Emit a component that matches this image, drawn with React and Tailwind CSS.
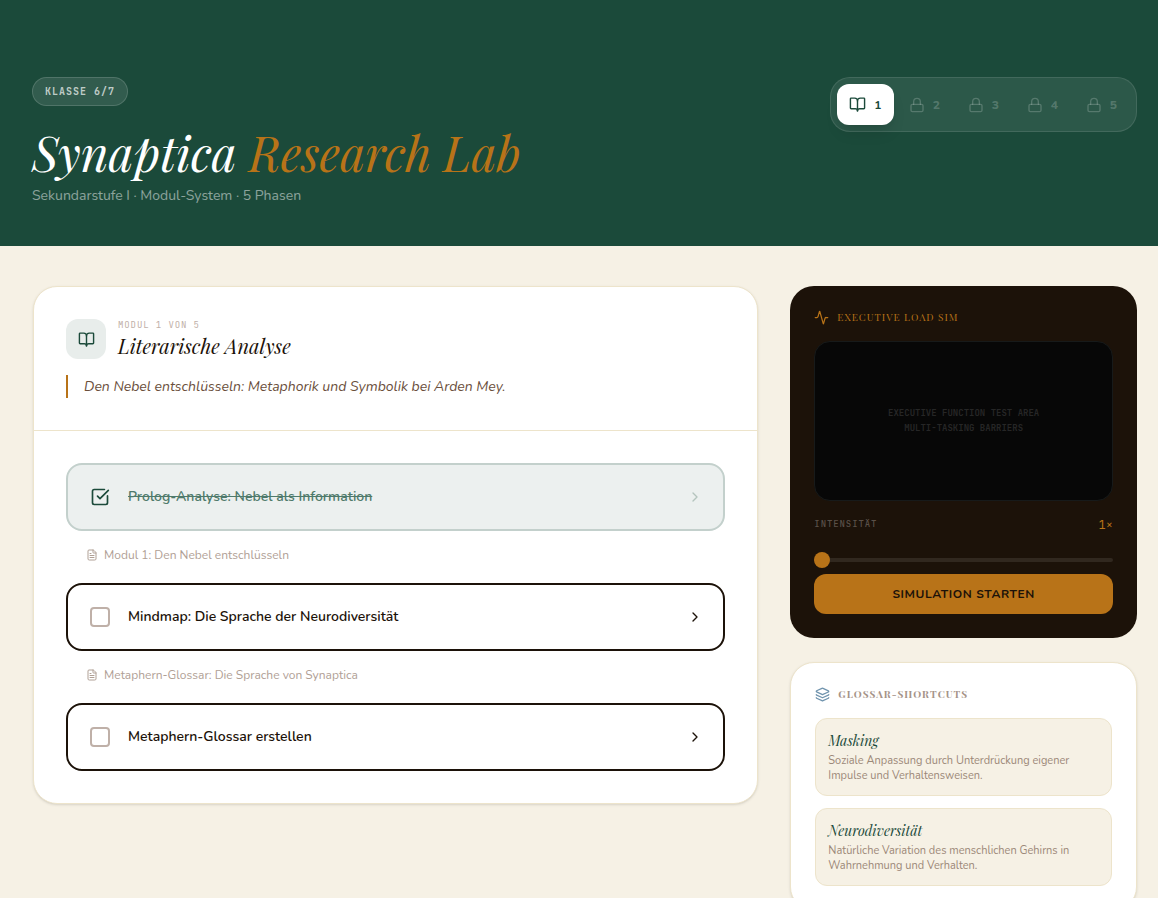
import { useState } from "react";
import { Activity, BookOpen, ChevronRight, FileText, Layers, Lock, SquareCheckBig } from "lucide-react";

const serif = "font-['Playfair_Display','Liberation_Serif',serif]";
const mono = "font-['JetBrains_Mono','Liberation_Mono',monospace]";

const initialTasks = [
  { id: "prolog", title: "Prolog-Analyse: Nebel als Information", done: true, source: "Modul 1: Den Nebel entschlüsseln" },
  { id: "mindmap", title: "Mindmap: Die Sprache der Neurodiversität", done: false, source: "Metaphern-Glossar: Die Sprache von Synaptica" },
  { id: "glossar", title: "Metaphern-Glossar erstellen", done: false },
];

const glossary = [
  { term: "Masking", text: "Soziale Anpassung durch Unterdrückung eigener Impulse und Verhaltensweisen." },
  { term: "Neurodiversität", text: "Natürliche Variation des menschlichen Gehirns in Wahrnehmung und Verhalten." },
];

function PhaseNav() {
  return (
    <nav aria-label="Phasen" className="flex gap-0.5 rounded-[20px] border border-white/10 bg-white/8 p-1.5">
      {[1, 2, 3, 4, 5].map((n) =>
        n === 1 ? (
          <button key={n} type="button" className="flex h-[41px] w-[57px] items-center justify-center gap-2 rounded-xl bg-white text-xs font-bold tracking-wide text-[#1b4a3a] shadow-lg">
            <BookOpen size={17} aria-hidden="true" />
            {n}
          </button>
        ) : (
          <button key={n} type="button" disabled className="flex h-[41px] w-[57px] items-center justify-center gap-2 rounded-xl text-xs font-extrabold tracking-wide text-white/20">
            <Lock size={16} aria-hidden="true" />
            {n}
          </button>
        )
      )}
    </nav>
  );
}

function Task({ task, onToggle }) {
  const { id, title, done, source } = task;
  return (
    <li>
      <div className={`flex h-[68px] items-center gap-4 rounded-2xl border-2 px-5 ${done ? "border-[#c3d0cc] bg-[#ecf0ef]" : "border-[#1c1209] bg-white"}`}>
        <span className="grid size-6 shrink-0 place-items-center">
          <input
            id={id}
            type="checkbox"
            checked={done}
            onChange={onToggle}
            className="col-start-1 row-start-1 size-5 appearance-none rounded border-2 border-[#bfb0a8] checked:border-transparent"
          />
          {done && <SquareCheckBig size={20} className="pointer-events-none col-start-1 row-start-1 text-[#1b4a3a]" aria-hidden="true" />}
        </span>
        <label htmlFor={id} className={`flex-1 text-sm font-semibold ${done ? "text-[#4f7a6b] line-through" : "text-[#1c1209]"}`}>
          {title}
        </label>
        <button type="button" aria-label={`${title} öffnen`} className={done ? "text-[#b4c4be]" : "text-[#1c1209]"}>
          <ChevronRight size={16} aria-hidden="true" />
        </button>
      </div>
      {source && (
        <p className="mt-4 flex h-4 items-center gap-1.5 pl-5 text-xs text-[#b0a095]">
          <FileText size={12} aria-hidden="true" />
          {source}
        </p>
      )}
    </li>
  );
}

function Simulation() {
  const [intensity, setIntensity] = useState(1);
  return (
    <section className="rounded-3xl bg-[#1c1209] p-6">
      <h2 className={`flex h-[15px] items-center gap-2 text-[10px] tracking-widest text-[#b87318] uppercase ${serif}`}>
        <Activity size={15} aria-hidden="true" />
        Executive Load Sim
      </h2>
      <div className={`mt-4 flex h-40 flex-col items-center justify-center rounded-2xl border border-[#171a1a] bg-[#070707] text-[9px] leading-[15px] font-bold text-[#262626] uppercase ${mono}`}>
        <p>Executive Function Test Area</p>
        <p>Multi-Tasking Barriers</p>
      </div>
      <div className={`mt-4 flex h-4 items-center justify-between ${mono}`}>
        <label htmlFor="intensity" className="text-[9px] font-medium tracking-widest text-[#5a5048] uppercase">Intensität</label>
        <output htmlFor="intensity" className="text-xs text-[#b87318]">{intensity}×</output>
      </div>
      <input
        id="intensity"
        type="range"
        min="1"
        max="10"
        value={intensity}
        onChange={(e) => setIntensity(Number(e.target.value))}
        className="mt-[19px] block h-4 w-full appearance-none bg-transparent [&::-webkit-slider-runnable-track]:h-1 [&::-webkit-slider-runnable-track]:rounded-full [&::-webkit-slider-runnable-track]:bg-[#31281f] [&::-webkit-slider-thumb]:-mt-1.5 [&::-webkit-slider-thumb]:size-4 [&::-webkit-slider-thumb]:appearance-none [&::-webkit-slider-thumb]:rounded-full [&::-webkit-slider-thumb]:bg-[#b87318]"
      />
      <button type="button" className="mt-1.5 h-10 w-full rounded-xl bg-[#b87318] text-xs font-bold tracking-wider text-[#1c1209] uppercase">
        Simulation starten
      </button>
    </section>
  );
}

function Glossary() {
  return (
    <section className="rounded-3xl border border-[#ede4cb] bg-white p-6 shadow-sm">
      <h2 className={`flex h-[15px] items-center gap-2 text-[10px] font-bold tracking-widest text-[#a59388] uppercase ${serif}`}>
        <Layers size={15} className="text-[#6f93ad]" aria-hidden="true" />
        Glossar-Shortcuts
      </h2>
      <dl className="mt-4 flex flex-col gap-3">
        {glossary.map(({ term, text }) => (
          <div key={term} className="rounded-xl border border-[#ede4cb] bg-[#f6f1e5] p-3">
            <dt className={`text-sm leading-5 text-[#1b4a3a] italic ${serif}`}>{term}</dt>
            <dd className="mt-0.5 text-[11px] leading-[15px] text-[#9c8878]">{text}</dd>
          </div>
        ))}
      </dl>
    </section>
  );
}

export default function App() {
  const [tasks, setTasks] = useState(initialTasks);
  const toggle = (id) => setTasks(tasks.map((t) => (t.id === id ? { ...t, done: !t.done } : t)));

  return (
    <div className="min-h-screen bg-[#f6f1e5] font-['Nunito','Open_Sans',sans-serif]">
      <header className="flex items-start justify-between bg-[#1b4a3a] pt-[77px] pr-[21px] pb-10 pl-8">
        <div>
          <span className={`inline-flex h-[29px] items-center rounded-full border border-white/15 bg-white/10 px-3 text-[10px] font-bold tracking-widest text-white/70 uppercase ${mono}`}>
            Klasse 6/7
          </span>
          <h1 className={`mt-5 text-5xl leading-[52px] text-white italic ${serif}`}>
            Synaptica <span className="text-[#b87318]">Research Lab</span>
          </h1>
          <p className="mt-2 text-sm leading-5 text-white/50">Sekundarstufe I · Modul-System · 5 Phasen</p>
        </div>
        <PhaseNav />
      </header>

      <main className="grid grid-cols-3 items-start gap-8 pt-10 pr-[21px] pb-10 pl-[33px]">
        <section className="col-span-2 rounded-3xl border border-[#ede4cb] bg-white shadow-sm">
          <div className="border-b border-[#ede4cb] p-8">
            <div className="flex h-10 items-center gap-3">
              <span className="grid size-10 place-items-center rounded-xl bg-[#e8edeb] text-[#1b4a3a]">
                <BookOpen size={17} aria-hidden="true" />
              </span>
              <div>
                <p className={`text-[9px] leading-[14px] tracking-widest text-[#bfb0a8] uppercase ${mono}`}>Modul 1 von 5</p>
                <h2 className={`text-xl leading-7 text-[#1c1209] italic ${serif}`}>Literarische Analyse</h2>
              </div>
            </div>
            <p className="mt-4 border-l-2 border-[#b87318] pl-4 text-sm leading-[23px] text-[#6b4f3c] italic">
              Den Nebel entschlüsseln: Metaphorik und Symbolik bei Arden Mey.
            </p>
          </div>
          <ul className="flex flex-col gap-5 p-8">
            {tasks.map((t) => (
              <Task key={t.id} task={t} onToggle={() => toggle(t.id)} />
            ))}
          </ul>
        </section>

        <aside className="flex flex-col gap-6">
          <Simulation />
          <Glossary />
        </aside>
      </main>
    </div>
  );
}
